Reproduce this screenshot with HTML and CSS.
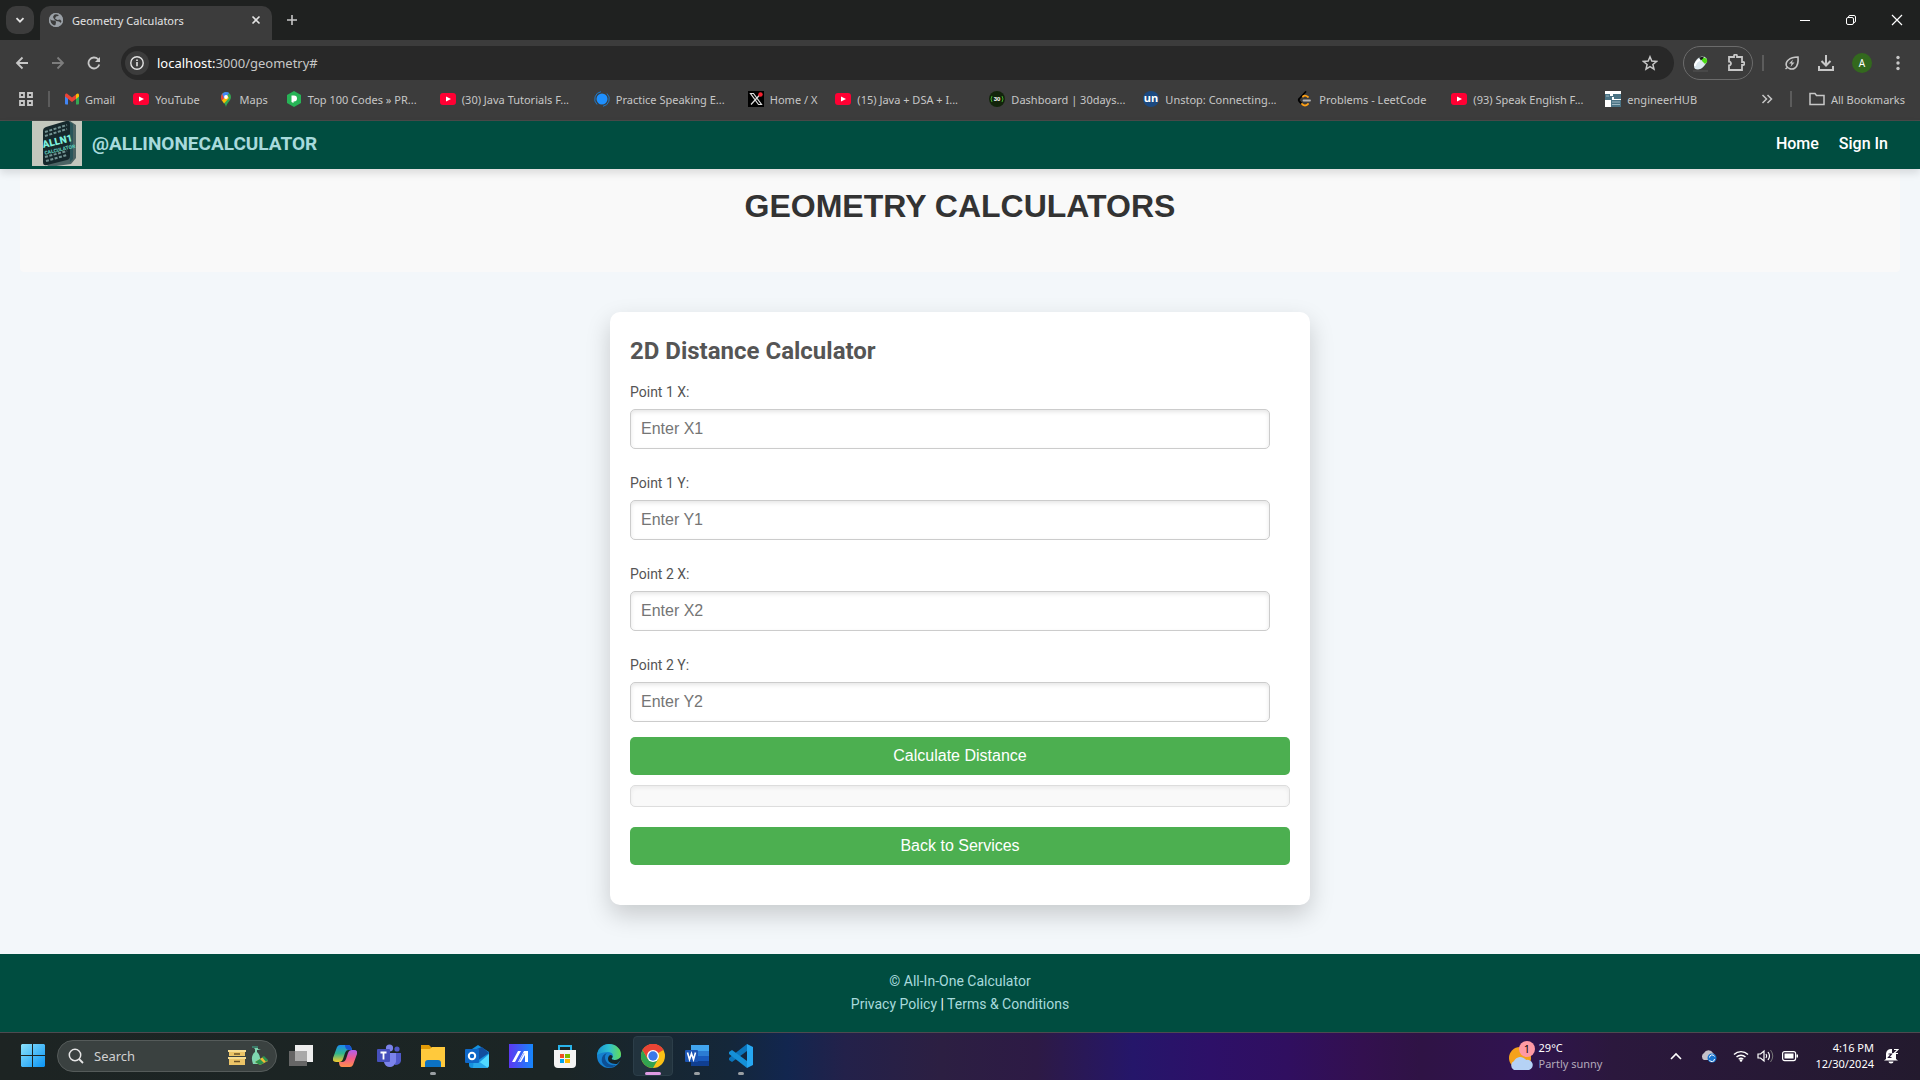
FILE: index.html
```html
<!DOCTYPE html>
<html lang="en">
<head>
<meta charset="utf-8">
<title>Geometry Calculators</title>
<link rel="stylesheet" href="styles.css">
</head>
<body>
<svg width="0" height="0" class="defs" aria-hidden="true">
  <symbol id="yt" viewBox="0 0 16 16"><rect y="2" width="16" height="12" rx="3" fill="#f03"/><path d="M6 5.500l5 2.500-5 2.500z" fill="#fff"/></symbol>
</svg>

<header class="browser">
  <div class="tabstrip">
    <button class="tab-search" aria-label="Search tabs"><svg width="12" height="12" viewBox="0 0 12 12"><path d="M2.500 4.200L6 7.700l3.500-3.500" fill="none" stroke="#e3e3e3" stroke-width="1.800"/></svg></button>
    <div class="tab">
      <svg width="16" height="16" viewBox="0 0 16 16"><circle cx="8" cy="8" r="7" fill="#9aa0a6"/><path d="M2 7q2 2 4 1.500t2 2-2 3.500q-4-2-4-7zM6.500 2q3-1 5 .5L10 4 8 4.500 7 6.500 9.500 8l2.500-.5 2 2-1 1.500-2-1.500L8 9 6 7 5 5z" fill="#3c3c3c"/><circle cx="8" cy="8" r="6.400" fill="none" stroke="#9aa0a6" stroke-width="1.400"/></svg>
      <span class="tab-title">Geometry Calculators</span>
      <button class="plain" aria-label="Close tab"><svg width="10" height="10" viewBox="0 0 10 10"><path d="M1.500 1.500l7 7m0-7l-7 7" stroke="#e3e3e3" stroke-width="1.600"/></svg></button>
    </div>
    <button class="plain new-tab" aria-label="New tab"><svg width="12" height="12" viewBox="0 0 12 12"><path d="M6 1v10M1 6h10" stroke="#c7c7c7" stroke-width="1.600"/></svg></button>
    <div class="window-controls">
      <button class="plain" aria-label="Minimize"><svg width="12" height="12" viewBox="0 0 12 12"><path d="M1 6.500h10" stroke="#fff"/></svg></button>
      <button class="plain" aria-label="Restore"><svg width="12" height="12" viewBox="0 0 12 12" fill="none" stroke="#fff"><rect x="1.500" y="3.500" width="7" height="7" rx="1.500"/><path d="M3.500 3.500V3A1.500 1.500 0 0 1 5 1.500h4A1.500 1.500 0 0 1 10.500 3v4A1.500 1.500 0 0 1 9 8.500h-.5"/></svg></button>
      <button class="plain" aria-label="Close"><svg width="12" height="12" viewBox="0 0 12 12"><path d="M1 1l10 10M11 1L1 11" stroke="#fff" stroke-width="1.200"/></svg></button>
    </div>
  </div>

  <div class="toolbar">
    <button class="plain" aria-label="Back"><svg width="14" height="14" viewBox="0 0 14 14"><path d="M13 7H2m5.500-5.500L2 7l5.500 5.500" fill="none" stroke="#c7c7c7" stroke-width="1.800"/></svg></button>
    <button class="plain" aria-label="Forward"><svg width="14" height="14" viewBox="0 0 14 14"><path d="M1 7h11M6.500 1.500L12 7l-5.500 5.500" fill="none" stroke="#7d7d7d" stroke-width="1.800"/></svg></button>
    <button class="plain" aria-label="Reload"><svg width="14" height="14" viewBox="0 0 14 14"><path d="M12.300 8.500A5.500 5.500 0 1 1 11 3.200l1 1" fill="none" stroke="#c7c7c7" stroke-width="1.800"/><path d="M13 1v5H8z" fill="#c7c7c7"/></svg></button>
    <div class="omnibox">
      <span class="site-info"><svg width="16" height="16" viewBox="0 0 16 16"><circle cx="8" cy="8" r="6.200" fill="none" stroke="#e3e3e3" stroke-width="1.400"/><path d="M8 7v4.300M8 4.500v1.600" stroke="#e3e3e3" stroke-width="1.600"/></svg></span>
      <span class="url"><b>localhost:</b>3000/geometry#</span>
      <button class="plain" aria-label="Bookmark this tab"><svg width="16" height="16" viewBox="0 0 16 16"><path d="M8 1.800l1.800 4.300 4.700.4-3.600 3 1.100 4.600L8 11.700l-4 2.400 1.100-4.600-3.600-3 4.700-.4z" fill="none" stroke="#c7c7c7" stroke-width="1.500"/></svg></button>
    </div>
    <div class="extensions">
      <svg width="17" height="17" viewBox="0 0 17 17"><path d="M1 16h15" stroke="#555"/><path d="M2 11C2 6 7 1 11 1.500s5 4 3 7-5 6-8 6-4-1-4-3.500z" fill="#dce8ee"/><path d="M10 3c3-1 6 1 5 4l-2 2-3-3z" fill="#4cdc14"/><path d="M7 2.500l5-1-1 2-2 2z" fill="#161d16"/><path d="M3 11c0-3 3-6 5-6" stroke="#fff" stroke-width="2" fill="none"/></svg>
      <svg width="18" height="18" viewBox="0 0 18 18"><path d="M2 3h5V2a1.500 1.500 0 0 1 3 0v1h5v5h1a1.500 1.500 0 0 1 0 3h-1v5H2v-4.500a2 2 0 0 0 0-4z" fill="none" stroke="#c7c7c7" stroke-width="1.800"/></svg>
    </div>
    <span class="divider"></span>
    <div class="tools">
      <svg width="16" height="16" viewBox="0 0 16 16"><path d="M14 2c.5 5-.5 9-3 11-3 2-7 1-8.500-2C1 7 5 2 14 2zM4 12l-2.500 2" fill="none" stroke="#c7c7c7" stroke-width="1.600"/><path d="M9 4.500L5 8.500h2.500L6.500 12l4-4.500H8z" fill="#c7c7c7"/></svg>
      <svg width="16" height="16" viewBox="0 0 16 16"><path d="M8 0v10M3.500 6L8 10.500 12.500 6M1 11v4h14v-4" fill="none" stroke="#c7c7c7" stroke-width="2"/></svg>
      <span class="avatar">A</span>
      <svg width="4" height="16" viewBox="0 0 4 16" fill="#c7c7c7"><circle cx="2" cy="2.500" r="1.700"/><circle cx="2" cy="8" r="1.700"/><circle cx="2" cy="13.500" r="1.700"/></svg>
    </div>
  </div>

  <nav class="bookmarks" aria-label="Bookmarks">
    <svg width="14" height="14" viewBox="0 0 14 14" fill="none" stroke="#c7c7c7" stroke-width="1.800"><path d="M1 1h4v4H1zM9 1h4v4H9zM1 9h4v4H1zM9 9h4v4H9z"/></svg>
    <span class="divider"></span>
    <div class="bookmark-list">
      <a href="#"><svg width="14" height="16" viewBox="0 0 14 16"><path d="M0 4v8.500c0 .5.500 1 1 1h2V6z" fill="#4285f4"/><path d="M14 4v8.500c0 .5-.5 1-1 1h-2V6z" fill="#34a853"/><path d="M11 3.500V8l3-2.500V4c0-1.500-1.500-2-2.500-1z" fill="#fbbc04"/><path d="M0 4v1.500L7 11l4-3V3.500L7 6.500 2.500 3C1.500 2 0 2.800 0 4z" fill="#ea4335"/></svg>Gmail</a>
      <a href="#"><svg width="16" height="16"><use href="#yt"/></svg>YouTube</a>
      <a href="#"><svg width="16" height="16" viewBox="0 0 16 16"><path d="M3 6a5 5 0 0 1 10 0c0 4-4 5-5 10-1-5-5-6-5-10z" fill="#34a853"/><path d="M3 6a5 5 0 0 1 2-4l3 4-4 4c-.6-1-1-2.500-1-4z" fill="#ea4335"/><path d="M4.200 3a5 5 0 0 1 7-1L6 8z" fill="#4285f4"/><path d="M4 9.500L9 4l2 3-5 5.500z" fill="#fbbc04"/><circle cx="8" cy="6" r="1.900" fill="#fff"/></svg>Maps</a>
      <a class="long" href="#"><svg width="16" height="16" viewBox="0 0 16 16"><path d="M8 0l7 4v8l-7 4-7-4V4z" fill="#27b356"/><path d="M5.500 4.500H8a3 3 0 0 1 0 6h-.5V12l-2-1z" fill="#fff"/></svg>Top 100 Codes » PR...</a>
      <a class="long" href="#"><svg width="16" height="16"><use href="#yt"/></svg>(30) Java Tutorials F...</a>
      <a class="long" href="#"><svg width="16" height="16" viewBox="0 0 16 16"><circle cx="8" cy="8" r="5.500" fill="#1e90ff"/><path d="M13 2.500A7.500 7.500 0 0 1 9 15.300M3 13.500A7.500 7.500 0 0 1 7 .7" fill="none" stroke="#1e78c8"/></svg>Practice Speaking E...</a>
      <a href="#"><svg width="16" height="16" viewBox="0 0 16 16"><path fill="#000" d="M0 0h16v16H0z"/><path d="M2.500 2.500h3l8 11h-3zM13 2.500l-10 11" fill="none" stroke="#ddd" stroke-width="1.200"/><circle cx="12.500" cy="3.500" r="2.200" fill="#f4212e"/></svg>Home / X</a>
      <a class="long" href="#"><svg width="16" height="16"><use href="#yt"/></svg>(15) Java + DSA + I...</a>
      <a class="long" href="#"><svg width="16" height="16" viewBox="0 0 16 16"><circle cx="8" cy="8" r="8" fill="#12240b"/><path d="M3 5q-2 3 0 6M13 5q2 3 0 6" stroke="#3faa2a" fill="none"/><text x="8" y="10" font-size="6" font-weight="700" text-anchor="middle" fill="#fff" font-family="Liberation Sans">30</text></svg>Dashboard | 30days...</a>
      <a class="long" href="#"><svg width="16" height="16" viewBox="0 0 16 16"><circle cx="8" cy="8" r="8" fill="#1c4980"/><text x="8" y="11" font-size="11" font-weight="700" text-anchor="middle" fill="#fff" font-family="Open Sans">un</text></svg>Unstop: Connecting...</a>
      <a class="long" href="#"><svg width="16" height="16" viewBox="0 0 16 16" fill="none" stroke-width="1.800" stroke-linecap="round"><path d="M8.500 1L2.500 7.500Q1 9 2.500 10.500L5 13" stroke="#000"/><path d="M6 5.500q2-2 5 .5M5 13q3 3 6 0" stroke="#ffa116"/><path d="M6.500 9.500h6.500" stroke="#b3b3b3"/></svg>Problems - LeetCode</a>
      <a class="long" href="#"><svg width="16" height="16"><use href="#yt"/></svg>(93) Speak English F...</a>
      <a href="#"><svg width="16" height="16" viewBox="0 0 16 16"><path fill="#fff" d="M0 0h16v16H0z"/><path d="M0 3h5v2h3V3h8v5H9V6H7v3H0zM6 9h10v7H6z" fill="#4b7384"/><path d="M7 11h8M7 13.500h8M1 5h3" stroke="#9db7c1"/></svg>engineerHUB</a>
    </div>
    <div class="bookmark-end">
      <svg width="12" height="10" viewBox="0 0 12 10"><path d="M1.500 1l4 4-4 4M6.500 1l4 4-4 4" fill="none" stroke="#c7c7c7" stroke-width="1.500"/></svg>
      <span class="divider"></span>
      <a href="#"><svg width="16" height="14" viewBox="0 0 16 14"><path d="M1 1.500h5l1.500 2H15v9H1z" fill="none" stroke="#c7c7c7" stroke-width="1.500"/></svg>All Bookmarks</a>
    </div>
  </nav>
</header>

<div class="page">
  <nav class="navbar">
    <a class="brand" href="#">
      <svg class="logo" width="50" height="45" viewBox="0 0 50 45">
        <path fill="#c3c7bd" d="M0 0h50v45H0z"/>
        <path d="M14 7l24-7 6 4v33l-5 6-22 3-4-4z" fill="#4c6464"/>
        <path d="M36 0l5 3v35l-3 3z" fill="#28555a"/>
        <path d="M11 10q0-3 3-4L34 0q4-1 4 3v32q0 3-3 4l-20 5q-4 1-4-3z" fill="#16282c"/>
        <path d="M13 11l22-7M13 15l22-7M13 36l22-6M14 40l21-6" stroke="#739292" stroke-width="2" stroke-dasharray="3 1.500"/>
        <g transform="rotate(-13 24 24)" font-family="Roboto, sans-serif" font-weight="900"><text x="11" y="24" font-size="10" fill="#7defdc">ALLN1</text><text x="11" y="31" font-size="5" fill="#5cc4b4">CALCULATOR</text></g>
      </svg>
      <span>@ALLINONECALCULATOR</span>
    </a>
    <div class="nav-links"><a href="#">Home</a><a href="#">Sign In</a></div>
  </nav>

  <div class="title-band"><h1>GEOMETRY CALCULATORS</h1></div>

  <main class="card">
    <h2>2D Distance Calculator</h2>
    <div class="field"><label for="x1">Point 1 X:</label><input id="x1" type="text" placeholder="Enter X1"></div>
    <div class="field"><label for="y1">Point 1 Y:</label><input id="y1" type="text" placeholder="Enter Y1"></div>
    <div class="field"><label for="x2">Point 2 X:</label><input id="x2" type="text" placeholder="Enter X2"></div>
    <div class="field"><label for="y2">Point 2 Y:</label><input id="y2" type="text" placeholder="Enter Y2"></div>
    <button class="action">Calculate Distance</button>
    <output class="result"></output>
    <button class="action">Back to Services</button>
  </main>

  <footer class="footer">
    <p>© All-In-One Calculator</p>
    <p class="legal"><a href="#">Privacy Policy</a> | <a href="#">Terms &amp; Conditions</a></p>
  </footer>
</div>

<div class="taskbar">
  <button class="plain start" aria-label="Start"><svg width="24" height="24" viewBox="0 0 24 24"><defs><linearGradient id="win" x2="1" y2="1"><stop stop-color="#8be2fc"/><stop offset="1" stop-color="#0a94f5"/></linearGradient></defs><path fill="url(#win)" d="M1 0h10v11H0V1zM12 0h11l1 1v10H12zM0 12h11v11H1l-1-1zM12 12h12v10l-1 1H12z"/></svg></button>
  <label class="search">
    <svg width="16" height="16" viewBox="0 0 16 16"><circle cx="7" cy="7" r="5.700" fill="none" stroke="#e6e6e6" stroke-width="1.500"/><path d="M11 11l4 4" stroke="#e6e6e6" stroke-width="1.800"/></svg>
    <input type="text" placeholder="Search" aria-label="Search">
    <svg width="40" height="20" viewBox="0 0 40 20"><path d="M1 5h16v5H1zM1 13h16v6H1z" fill="#ecc467"/><path d="M0 4h18v2H0zM0 11h18v2H0z" fill="#f7dc92"/><path d="M6 8h6M6 15.500h6" stroke="#6c5226" stroke-width="1.500"/><path d="M24 0h6v3l3 1h-4v2q4 3 3 12h-7q-3-8 2-12V3z" fill="#7fd5b0"/><path d="M24 0h6v2h-6z" fill="#3c7b69"/><path d="M27 16l8-5 5 4-8 4z" fill="#f1bd35"/><path d="M27 16l5-3 4 4-4 2zM34 11l2-1 4 4-2 2z" fill="#2d9350"/></svg>
  </label>
  <div class="apps">
    <button class="app" aria-label="Task view"><svg width="24" height="24" viewBox="0 0 24 24"><path fill="#ededed" d="M6 1h18v17H6z"/><path fill="#666" d="M0 7h18v15H0z"/><path fill="#a9a9a9" d="M6 7h12v10H6z"/></svg></button>
    <button class="app" aria-label="Copilot"><svg width="24" height="24" viewBox="0 0 24 24"><defs><linearGradient id="cpa" x2="0" y2="1"><stop stop-color="#1b8bf0"/><stop offset=".5" stop-color="#31b68c"/><stop offset="1" stop-color="#f5c92c"/></linearGradient><linearGradient id="cpb" x2="0" y2="1"><stop stop-color="#b05df0"/><stop offset=".5" stop-color="#f25b8c"/><stop offset="1" stop-color="#ff8f4a"/></linearGradient></defs><path d="M7 1h8q3 0 4 5h-4q-2 0-3 3l-2 6q-1 3-4 3H3q-4 0-3-4L4 3q1-2 3-2z" fill="url(#cpa)"/><path d="M17 23H9q-3 0-3-5h3q3 0 4-3l2-6q1-3 4-3h2q4 0 3 4l-4 11q-1 2-3 2z" fill="url(#cpb)"/><path d="M12 1h3q3 0 4 5h-4q-3-1-3-5z" fill="#1854d3"/></svg></button>
    <button class="app" aria-label="Teams"><svg width="24" height="24" viewBox="0 0 24 24"><circle cx="20" cy="5" r="2.600" fill="#5059c9"/><circle cx="12.500" cy="4" r="3.600" fill="#7b83eb"/><path d="M16 9h8v8q-1 4-6 4z" fill="#5059c9"/><path d="M7 9h12v9q-2 5-6 5-5 0-6-5z" fill="#7b83eb"/><rect y="5" width="13" height="13" rx="1" fill="#4650bb"/><path d="M3.500 8.500h6M6.500 8.500v7" stroke="#fff" stroke-width="1.800"/></svg></button>
    <button class="app running" aria-label="File Explorer"><svg width="24" height="24" viewBox="0 0 24 24"><path d="M0 1h8l3 3v4H0z" fill="#e29a06"/><path d="M0 5h9l2-2h13v20H0z" fill="#ffc93c"/><path d="M4 23v-4q0-3 3-3h10q3 0 3 3v4z" fill="#0c72c4"/></svg></button>
    <button class="app" aria-label="Outlook"><svg width="24" height="24" viewBox="0 0 24 24"><path d="M4 7l9-6 11 7v13q0 3-3 3H7q-3 0-3-3z" fill="#1490df"/><path d="M9 6l8-3 7 6-12 8z" fill="#124e9d"/><path d="M24 10v11q0 3-3 3H8z" fill="#50d9ff"/><path d="M9 14l14 10H8z" fill="#28a8ea"/><rect y="5" width="14" height="14" rx="1" fill="#0f67c7"/><circle cx="7" cy="12" r="3.200" fill="none" stroke="#fff" stroke-width="2"/></svg></button>
    <button class="app" aria-label="MyASUS"><svg width="24" height="24" viewBox="0 0 24 24"><defs><linearGradient id="asus" x2="1"><stop stop-color="#5c38f2"/><stop offset="1" stop-color="#1687fb"/></linearGradient></defs><path fill="url(#asus)" d="M0 0h24v24H0z"/><path d="M3 18l6-11h3L6 18zM9 18l6-11h4v11h-3v-7l-4 7z" fill="#fff"/><path d="M10 18l5-9" stroke="#91a1ff"/></svg></button>
    <button class="app" aria-label="Microsoft Store"><svg width="24" height="24" viewBox="0 0 24 24"><path d="M6 7V2h12v5" fill="none" stroke="#29b4ea" stroke-width="2"/><path d="M1 6h22v14q0 4-4 4H5q-4 0-4-4z" fill="#f4f4f4"/><path fill="#f25022" d="M7 10h4v4H7z"/><path fill="#7fba00" d="M12 10h5v4h-5z"/><path fill="#00a4ef" d="M7 15h4v4H7z"/><path fill="#ffb900" d="M12 15h5v4h-5z"/></svg></button>
    <button class="app" aria-label="Edge"><svg width="24" height="24" viewBox="0 0 24 24"><defs><linearGradient id="edge" x2="1"><stop stop-color="#1794d2"/><stop offset=".5" stop-color="#2fc0d0"/><stop offset="1" stop-color="#65db55"/></linearGradient></defs><circle cx="12" cy="12" r="12" fill="#1580cf"/><path d="M0 11C1 4 6 0 12 0c7 0 12 5 12 10 0 4-3 6-6 6-2 0-4-1-3-2 2-2 1-6-4-6-4 0-8 1-11 3z" fill="url(#edge)"/><path d="M8 13c0 5 4 9 11 8-4 4-12 3-14-3-1-4 1-8 5-9-1 1-2 2-2 4z" fill="#0c4f94"/><path d="M15 14c-1 1 1 2 3 2 2 0 4-1 6-3v3l-4 4c-4 0-9-1-9-5 0-2 1-4 3-4 2 1 2 2 1 3z" fill="#172529"/></svg></button>
    <button class="app running active" aria-label="Chrome"><svg width="24" height="24" viewBox="0 0 24 24"><circle cx="12" cy="12" r="12" fill="#fbc116"/><path d="M12 12L1.600 6A12 12 0 0 1 22.400 6z" fill="#e94435"/><path d="M1.600 6A12 12 0 0 0 12 24l5.200-9L12 12 6.800 15z" fill="#32a350"/><path d="M12 6h10.400A12 12 0 0 0 1.600 6l5.200 9z" fill="#e94435"/><circle cx="12" cy="12" r="6" fill="#fff"/><circle cx="12" cy="12" r="4.700" fill="#3b78e7"/></svg></button>
    <button class="app running" aria-label="Word"><svg width="24" height="24" viewBox="0 0 24 24"><path fill="#41a5ee" d="M6 1h18v6H6z"/><path fill="#2b7cd3" d="M6 7h18v5H6z"/><path fill="#185abd" d="M6 12h18v5H6z"/><path fill="#103f91" d="M6 17h18v5H6z"/><rect y="6" width="13" height="12" rx="1" fill="#1c55b4"/><path d="M2.500 8.500l2 7 2-6 2 6 2-7" fill="none" stroke="#fff" stroke-width="1.600"/></svg></button>
    <button class="app running" aria-label="Visual Studio Code"><svg width="24" height="24" viewBox="0 0 24 24"><path d="M18 0v7L3 18l-3-2v-2z" fill="#0b75bd"/><path d="M18 24v-7L3 6 0 8v2z" fill="#1590d8"/><path d="M18 0l6 3v18l-6 3z" fill="#26a7f2"/></svg></button>
  </div>
  <div class="tray">
    <div class="weather">
      <svg width="26" height="30" viewBox="0 0 26 30"><circle cx="11" cy="17" r="11" fill="#f5a21c"/><path d="M5 29a5 5 0 0 1 0-9 7 7 0 0 1 12-1 5 5 0 0 1 3 10z" fill="#b5d2f5"/><circle cx="18" cy="8" r="8" fill="#ff99a4"/><text x="18" y="12" font-size="11" text-anchor="middle" font-family="Open Sans">1</text></svg>
      <div><p>29°C</p><p class="dim">Partly sunny</p></div>
    </div>
    <svg width="12" height="8" viewBox="0 0 12 8"><path d="M1 7l5-5 5 5" fill="none" stroke="#fff" stroke-width="1.600"/></svg>
    <svg class="cloud" width="17" height="14" viewBox="0 0 17 14"><path d="M4 11a4 4 0 0 1 0-7A5 5 0 0 1 13 4q2 1 2 4l-4 3z" fill="#c4c1c8"/><circle cx="12" cy="9" r="4.500" fill="#1774cf"/><path d="M9.500 8.500a2.600 2.600 0 0 1 5-1M14.500 10a2.600 2.600 0 0 1-5 1" stroke="#fff" fill="none"/></svg>
    <div class="status">
      <svg width="16" height="12" viewBox="0 0 16 12"><path d="M1 4.500a10 10 0 0 1 14 0M3.500 7a6.500 6.500 0 0 1 9 0M5.700 9.200a3.400 3.400 0 0 1 4.600 0" fill="none" stroke="#fff" stroke-width="1.400"/><circle cx="8" cy="10.500" r="1.300" fill="#fff"/></svg>
      <svg width="17" height="14" viewBox="0 0 17 14"><path d="M1 5h2.500L7 2v10L3.500 9H1z" fill="none" stroke="#fff" stroke-width="1.200"/><path d="M9 5q1.500 2 0 4M11 3q3 4 0 8" fill="none" stroke="#fff" stroke-width="1.200"/><path d="M13.500 1q4.500 6 0 12" fill="none" stroke="#777"/></svg>
      <svg width="16" height="12" viewBox="0 0 16 12"><rect x=".6" y="1.600" width="13" height="9" rx="2" fill="none" stroke="#fff" stroke-width="1.200"/><path fill="#fff" d="M2.500 3.500h9v5h-9zM14.500 4.500h1.500v3h-1.500z"/></svg>
    </div>
    <div class="clock"><p>4:16 PM</p><p>12/30/2024</p></div>
    <svg width="15" height="16" viewBox="0 0 15 16"><path d="M2 11V6a5 5 0 0 1 6-5v4h4v6l2 1.500H0z" fill="#fff"/><path d="M4.500 13.500a2.500 2 0 0 0 5 0z" fill="#fff"/><path d="M4.500 6h3l-3 3.500h3" fill="none" stroke="#271a36" stroke-width="1.200"/><path d="M10 1.500h4l-4 4h4" fill="none" stroke="#fff" stroke-width="1.200"/></svg>
  </div>
</div>
</body>
</html>
```
FILE: styles.css
```css
* { box-sizing: border-box; }

body {
  margin: 0;
  min-height: 100vh;
  display: flex;
  flex-direction: column;
  font-family: "Noto Sans", "Open Sans", sans-serif;
}

p, h1, h2 { margin: 0; }
a { color: inherit; text-decoration: none; }
svg { display: block; flex: none; }
.defs { position: absolute; }

.plain {
  display: grid;
  place-items: center;
  padding: 0;
  border: 0;
  background: none;
}

/* Browser frame */
.browser {
  background: #3c3c3c;
  color: #c7c7c7;
  font-size: 11px;
  border-bottom: 1px solid #4a4a4a;
}

.tabstrip {
  display: flex;
  align-items: center;
  height: 40px;
  padding-left: 6px;
  background: #1f2120;
}

.tab-search {
  display: grid;
  place-items: center;
  width: 28px;
  height: 28px;
  padding: 0;
  border: 0;
  border-radius: 10px;
  background: #3c3c3c;
}

.tab {
  display: flex;
  align-items: center;
  gap: 8px;
  align-self: flex-end;
  width: 232px;
  height: 34px;
  margin-left: 6px;
  padding: 0 11px 6px 8px;
  border-radius: 10px 10px 0 0;
  background: #3c3c3c;
  color: #e3e3e3;
}

.tab-title { flex: 1; }
.new-tab { margin-left: 14px; }

.window-controls {
  display: flex;
  gap: 34px;
  margin-left: auto;
  padding-right: 17px;
}

.toolbar {
  display: flex;
  align-items: center;
  height: 46px;
  padding: 0 20px 0 15px;
  gap: 22px;
}

.omnibox {
  flex: 1;
  display: flex;
  align-items: center;
  gap: 8px;
  height: 34px;
  margin-left: -2px;
  padding: 0 16px 0 4px;
  border-radius: 17px;
  background: #282828;
  font-size: 13px;
}

.site-info {
  display: grid;
  place-items: center;
  width: 24px;
  height: 24px;
  border-radius: 50%;
  background: #3c3c3c;
}

.url { flex: 1; }
.url b { color: #fff; font-weight: 400; }

.extensions {
  display: flex;
  align-items: center;
  justify-content: space-between;
  width: 70px;
  height: 34px;
  margin: 0 -13px;
  padding: 0 7px 0 8px;
  border: 1px solid #6b6b6b;
  border-radius: 17px;
}

.divider {
  width: 2px;
  height: 16px;
  background: #5c5c5c;
}

.tools {
  display: flex;
  align-items: center;
  gap: 18px;
  margin-left: -2px;
}

.avatar {
  display: grid;
  place-items: center;
  width: 20px;
  height: 20px;
  border-radius: 50%;
  background: #33691e;
  color: #fff;
  font-size: 10px;
}

.tools > :last-child { margin-left: 6px; }

.bookmarks {
  display: flex;
  align-items: center;
  height: 34px;
  padding: 0 15px 8px 19px;
  white-space: nowrap;
}

.bookmarks a {
  display: flex;
  align-items: center;
  gap: 6px;
}

.bookmarks .long { width: 136px; }
.bookmarks > .divider { margin: 0 15px; }

.bookmark-list {
  display: flex;
  gap: 18px;
}

.bookmark-end {
  display: flex;
  align-items: center;
  gap: 17px;
  margin-left: auto;
}

/* Calculator page */
.page {
  flex: 1;
  display: flex;
  flex-direction: column;
  background: #f3f7fa;
  font-family: Roboto, sans-serif;
}

.navbar {
  position: relative;
  display: flex;
  align-items: center;
  justify-content: space-between;
  height: 48px;
  padding: 0 32px 3px;
  background: #004d40;
  box-shadow: 0 4px 8px rgba(0, 0, 0, 0.12);
}

.brand {
  display: flex;
  align-items: center;
  gap: 10px;
  color: #a8dadc;
  font-size: 19px;
  font-weight: 700;
}

.nav-links {
  display: flex;
  gap: 20px;
  color: #fff;
  font-size: 16px;
  font-weight: 500;
}

.title-band {
  height: 103px;
  margin: 0 20px;
  padding-top: 20px;
  border-radius: 0 0 4px 4px;
  background: #f9f9f9;
  text-align: center;
}

h1 {
  color: #333;
  font: 700 32px/34px "Liberation Sans", Arial, sans-serif;
}

.card {
  width: 100%;
  max-width: 700px;
  margin: 40px auto 49px;
  padding: 20px 20px 40px;
  border-radius: 10px;
  background: #fff;
  box-shadow: 0 10px 24px rgba(0, 0, 0, 0.18);
  color: #555;
}

h2 {
  margin-bottom: 10px;
  font-size: 24px;
  line-height: 38px;
}

.field { margin-bottom: 22px; }

.field label {
  display: block;
  margin-bottom: 5px;
  font-size: 14px;
  line-height: 24px;
}

.field input {
  display: block;
  width: calc(100% - 20px);
  height: 40px;
  padding: 0 10px;
  border: 1px solid #ccc;
  border-radius: 5px;
  background: #fff;
  box-shadow: inset 0 2px 4px rgba(0, 0, 0, 0.1);
  font: 16px "Liberation Sans", Arial, sans-serif;
}

.field input::placeholder { color: #757575; }
.field:has(+ .action) { margin-bottom: 15px; }

.action {
  display: block;
  width: 100%;
  height: 38px;
  padding: 0;
  border: 0;
  border-radius: 5px;
  background: #4caf50;
  color: #fff;
  font: 16px "Liberation Sans", Arial, sans-serif;
}

.result {
  display: block;
  min-height: 22px;
  margin: 10px 0 20px;
  border: 1px solid #ddd;
  border-radius: 5px;
  background: #f9f9f9;
  box-shadow: inset 0 2px 4px rgba(0, 0, 0, 0.06);
}

.footer {
  margin-top: auto;
  padding: 16px;
  background: #004d40;
  color: #a8dadc;
  font-size: 14px;
  line-height: 23px;
  text-align: center;
}

.legal { color: #fff; }
.legal a { color: #a8dadc; }

/* Desktop taskbar */
.taskbar {
  display: flex;
  align-items: center;
  height: 48px;
  padding: 0 21px 2px;
  border-top: 1px solid #4d4a50;
  background: linear-gradient(90deg, #1d2423 0%, #1b2525 29%, #14273a 38%, #12264f 41%, #23214a 44%, #2c1f42 49%, #2d1a45 54%, #25166a 59%, #2d1068 63%, #300f60 67%, #33104f 71%, #2f1345 74%, #301350 79%, #2b183d 84%, #231a2e 100%);
  color: #fff;
  font-size: 11px;
  line-height: 16px;
}

.search {
  display: flex;
  align-items: center;
  gap: 10px;
  width: 220px;
  height: 32px;
  margin-left: 12px;
  padding: 0 8px 0 10px;
  border: 1px solid #555b5a;
  border-radius: 16px;
  background: #3a4140;
}

.search input {
  flex: 1;
  min-width: 0;
  padding: 0;
  border: 0;
  background: none;
  color: #fff;
  font: 13px "Noto Sans", sans-serif;
}

.search input::placeholder { color: #d0d0d0; }

.apps {
  display: flex;
  gap: 4px;
  margin-left: 4px;
}

.app {
  position: relative;
  display: grid;
  place-items: center;
  width: 40px;
  height: 40px;
  padding: 0;
  border: 1px solid transparent;
  border-radius: 4px;
  background: none;
}

.running::after {
  content: "";
  position: absolute;
  bottom: 0;
  left: calc(50% - 3px);
  width: 6px;
  height: 3px;
  border-radius: 2px;
  background: #9a9fa3;
}

.active {
  border-color: #2c3e49;
  background: #22333e;
}

.active::after {
  left: calc(50% - 8px);
  width: 16px;
  background: #de9be3;
}

.tray {
  display: flex;
  align-items: center;
  margin-left: auto;
}

.weather {
  display: flex;
  align-items: center;
  gap: 4px;
  margin-right: 68px;
}

.dim { color: #b3a9bb; }
.cloud { margin: 0 16px 0 18px; }

.status {
  display: flex;
  align-items: center;
  gap: 8px;
}

.clock {
  margin: 0 10px 0 17px;
  text-align: right;
}
```
